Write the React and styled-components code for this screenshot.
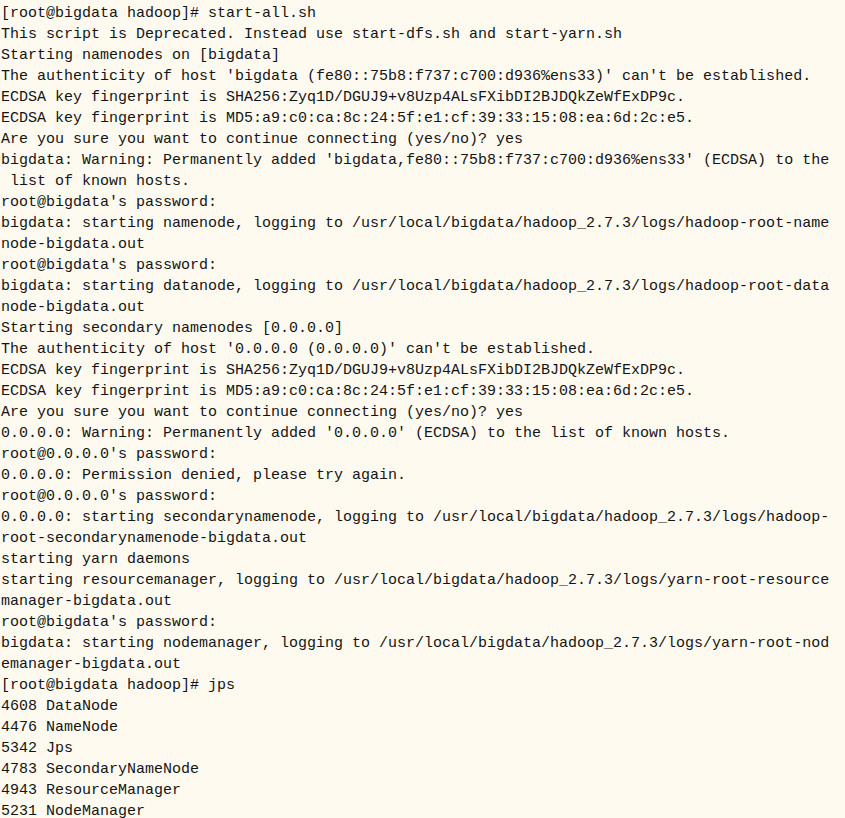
import React from 'react'
import styled, { createGlobalStyle } from 'styled-components';

const lines = [
  "[root@bigdata hadoop]# start-all.sh",
  "This script is Deprecated. Instead use start-dfs.sh and start-yarn.sh",
  "Starting namenodes on [bigdata]",
  "The authenticity of host 'bigdata (fe80::75b8:f737:c700:d936%ens33)' can't be established.",
  "ECDSA key fingerprint is SHA256:Zyq1D/DGUJ9+v8Uzp4ALsFXibDI2BJDQkZeWfExDP9c.",
  "ECDSA key fingerprint is MD5:a9:c0:ca:8c:24:5f:e1:cf:39:33:15:08:ea:6d:2c:e5.",
  "Are you sure you want to continue connecting (yes/no)? yes",
  "bigdata: Warning: Permanently added 'bigdata,fe80::75b8:f737:c700:d936%ens33' (ECDSA) to the",
  " list of known hosts.",
  "root@bigdata's password:",
  "bigdata: starting namenode, logging to /usr/local/bigdata/hadoop_2.7.3/logs/hadoop-root-name",
  "node-bigdata.out",
  "root@bigdata's password:",
  "bigdata: starting datanode, logging to /usr/local/bigdata/hadoop_2.7.3/logs/hadoop-root-data",
  "node-bigdata.out",
  "Starting secondary namenodes [0.0.0.0]",
  "The authenticity of host '0.0.0.0 (0.0.0.0)' can't be established.",
  "ECDSA key fingerprint is SHA256:Zyq1D/DGUJ9+v8Uzp4ALsFXibDI2BJDQkZeWfExDP9c.",
  "ECDSA key fingerprint is MD5:a9:c0:ca:8c:24:5f:e1:cf:39:33:15:08:ea:6d:2c:e5.",
  "Are you sure you want to continue connecting (yes/no)? yes",
  "0.0.0.0: Warning: Permanently added '0.0.0.0' (ECDSA) to the list of known hosts.",
  "root@0.0.0.0's password:",
  "0.0.0.0: Permission denied, please try again.",
  "root@0.0.0.0's password:",
  "0.0.0.0: starting secondarynamenode, logging to /usr/local/bigdata/hadoop_2.7.3/logs/hadoop-",
  "root-secondarynamenode-bigdata.out",
  "starting yarn daemons",
  "starting resourcemanager, logging to /usr/local/bigdata/hadoop_2.7.3/logs/yarn-root-resource",
  "manager-bigdata.out",
  "root@bigdata's password:",
  "bigdata: starting nodemanager, logging to /usr/local/bigdata/hadoop_2.7.3/logs/yarn-root-nod",
  "emanager-bigdata.out",
  "[root@bigdata hadoop]# jps",
  "4608 DataNode",
  "4476 NameNode",
  "5342 Jps",
  "4783 SecondaryNameNode",
  "4943 ResourceManager",
  "5231 NodeManager",
];

const GlobalStyle = createGlobalStyle`
  html, body {
    margin: 0;
    padding: 0;
    background: #fffaf0;
  }
`;

const Terminal = styled.div`
  width: 845px;
  height: 818px;
  overflow: hidden;
  box-sizing: border-box;
  padding: 3px 0 0 1px;
  background: #fffaf0;
  color: #141414;
  font-family: "Liberation Mono", "DejaVu Sans Mono", monospace;
  font-size: 15px;
`;

const Line = styled.div`
  height: 21px;
  line-height: 21px;
  white-space: pre;
`;

export default function App() {
  return (
    <>
      <GlobalStyle />
      <Terminal>
        {lines.map((text, i) => (
          <Line key={i}>{text}</Line>
        ))}
      </Terminal>
    </>
  );
}
